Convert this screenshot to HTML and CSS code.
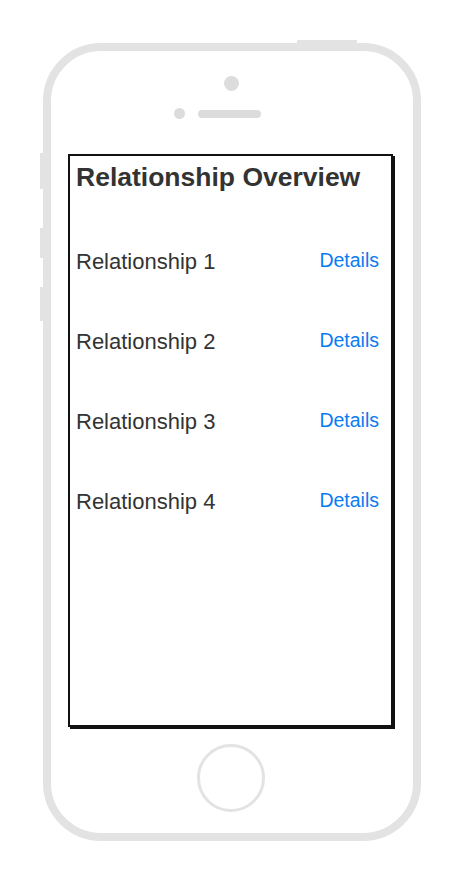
FILE: index.html
```html
<!DOCTYPE html>
<html lang="en">
<head>
<meta charset="utf-8">
<title>Relationship Overview</title>
<link rel="stylesheet" href="styles.css">
</head>
<body>
<div class="phone">
  <span class="hw-btn hw-top"></span>
  <span class="hw-btn hw-mute"></span>
  <span class="hw-btn hw-vol-up"></span>
  <span class="hw-btn hw-vol-down"></span>
  <div class="bezel-top">
    <span class="camera"></span>
    <div class="sensor-row">
      <span class="sensor"></span>
      <span class="speaker"></span>
    </div>
  </div>
  <div class="screen">
    <h1 class="title">Relationship Overview</h1>
    <ul class="list">
      <li class="row"><span class="row-name">Relationship 1</span><a class="row-link" href="#">Details</a></li>
      <li class="row"><span class="row-name">Relationship 2</span><a class="row-link" href="#">Details</a></li>
      <li class="row"><span class="row-name">Relationship 3</span><a class="row-link" href="#">Details</a></li>
      <li class="row"><span class="row-name">Relationship 4</span><a class="row-link" href="#">Details</a></li>
    </ul>
  </div>
  <div class="bezel-bottom">
    <span class="home"></span>
  </div>
</div>
</body>
</html>
```

FILE: styles.css
```css
* { box-sizing: border-box; }

html, body {
  margin: 0;
  padding: 0;
  background: #ffffff;
  font-family: "Liberation Sans", Arial, sans-serif;
}

.phone {
  position: relative;
  margin: 43px 0 0 43px;
  width: 378px;
  height: 798px;
  border: 8px solid #e3e3e3;
  border-radius: 58px;
  background: #ffffff;
  display: flex;
  flex-direction: column;
}

.hw-btn {
  position: absolute;
  background: #e3e3e3;
}
.hw-top { top: -11px; left: 246px; width: 60px; height: 4px; }
.hw-mute { left: -11px; top: 102px; width: 4px; height: 36px; }
.hw-vol-up { left: -11px; top: 177px; width: 4px; height: 30px; }
.hw-vol-down { left: -11px; top: 236px; width: 4px; height: 34px; }

.bezel-top {
  height: 103px;
  display: flex;
  flex-direction: column;
}

.camera {
  display: block;
  width: 15px;
  height: 15px;
  border-radius: 50%;
  background: #dcdcdc;
  margin: 25px 0 0 173px;
}

.sensor-row {
  display: flex;
  align-items: center;
  gap: 13px;
  margin: 17px 0 0 123px;
}

.sensor {
  width: 11px;
  height: 11px;
  border-radius: 50%;
  background: #dcdcdc;
}

.speaker {
  width: 63px;
  height: 8px;
  border-radius: 4px;
  background: #dcdcdc;
}

.screen {
  margin-left: 17px;
  width: 325px;
  height: 573px;
  border: 2px solid #111111;
  box-shadow: 2px 2px 0 #111111;
  padding: 6px 12px 0 6px;
  background: #ffffff;
}

.title {
  margin: 0;
  font-size: 26.5px;
  font-weight: 700;
  color: #333333;
  line-height: 30px;
}

.list {
  list-style: none;
  margin: 30px 0 0 0;
  padding: 0;
}

.row {
  height: 80px;
  display: flex;
  align-items: center;
  justify-content: space-between;
}

.row-name {
  font-size: 22px;
  color: #333333;
}

.row-link {
  font-size: 19.5px;
  color: #0a7cf4;
  text-decoration: none;
  margin-top: -4px;
}

.bezel-bottom {
  flex: 1;
  display: flex;
  justify-content: center;
  padding-top: 17px;
}

.home {
  width: 68px;
  height: 68px;
  border-radius: 50%;
  border: 3px solid #e3e3e3;
  margin-left: -3px;
}
```
